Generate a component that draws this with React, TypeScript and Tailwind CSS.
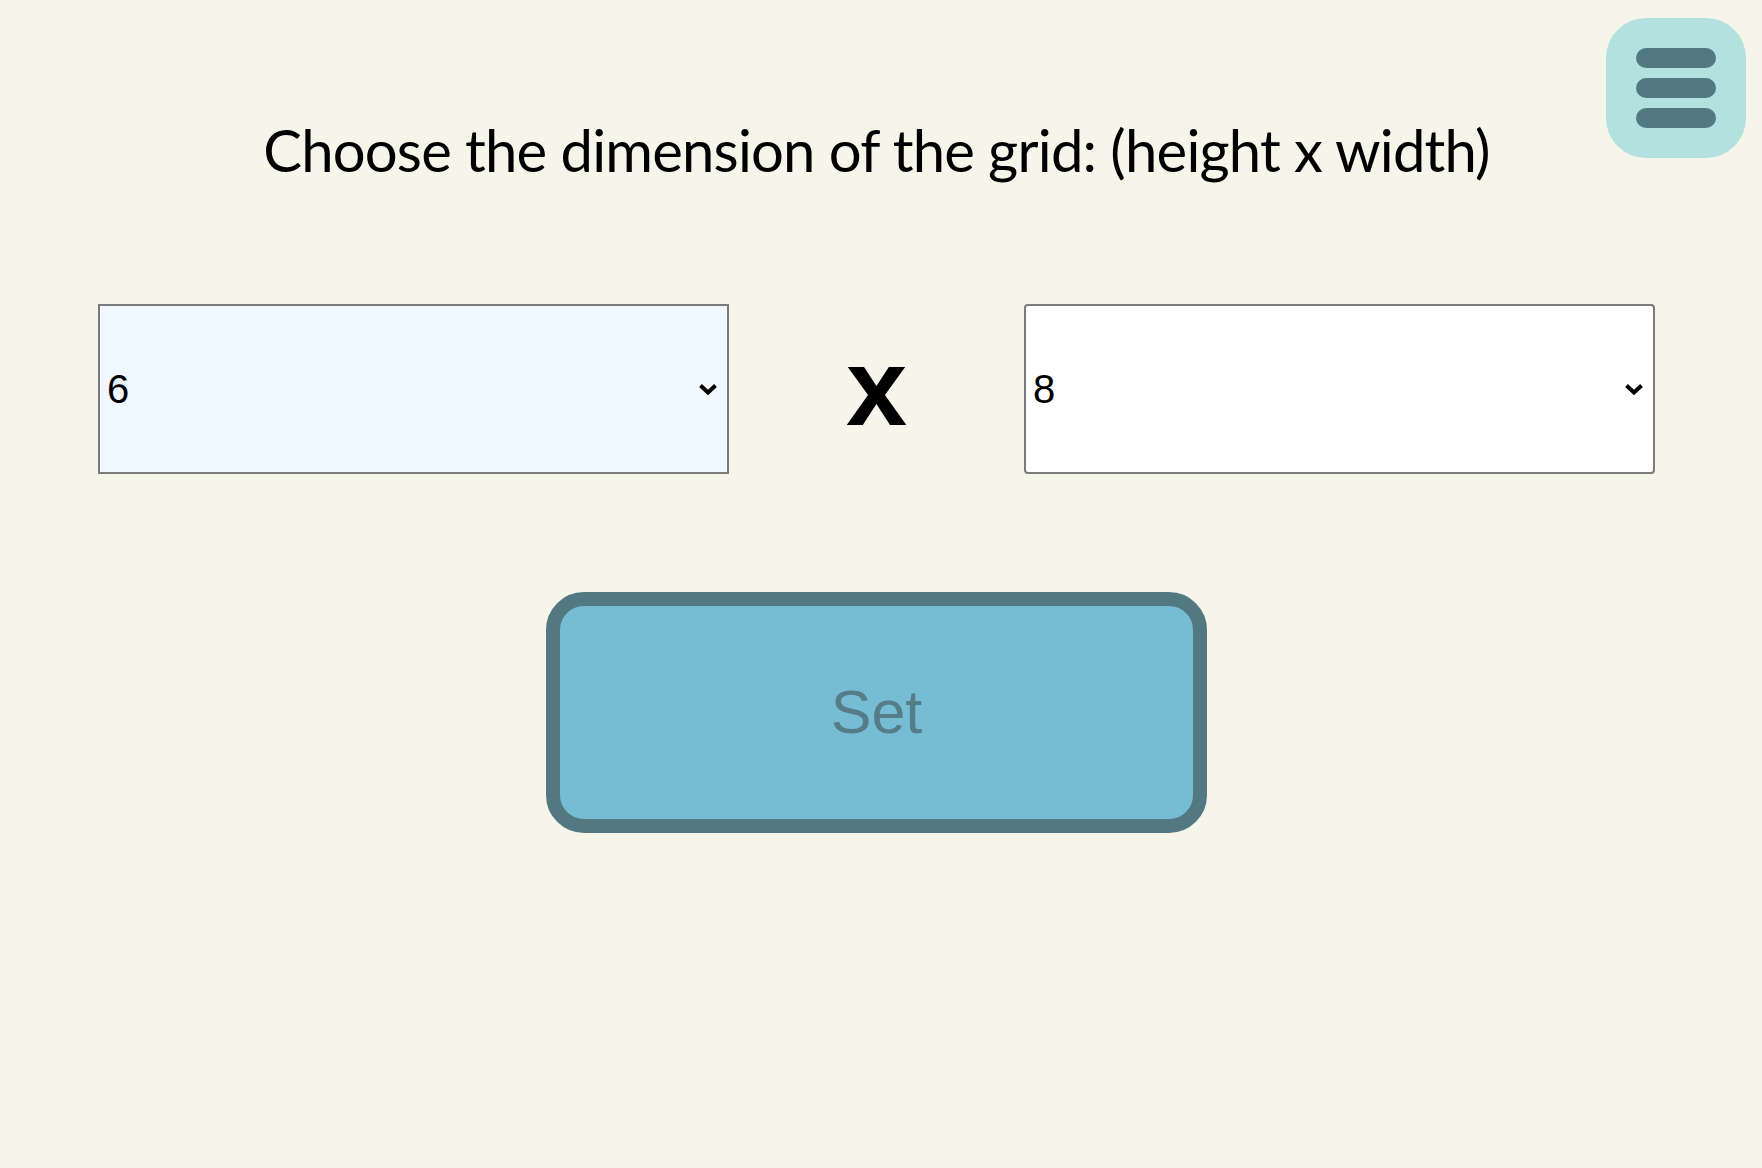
import { useState } from "react";

const selectBase =
  "w-full h-full appearance-none pl-[7px] pr-10 text-[40px] text-black outline-none cursor-pointer";

const Chevron = () => (
  <svg
    className="pointer-events-none absolute right-[9px] top-1/2 -translate-y-1/2"
    width="20"
    height="13"
    viewBox="0 0 20 13"
  >
    <path
      d="M2.5 3 L10 10 L17.5 3"
      fill="none"
      stroke="black"
      strokeWidth="4"
    />
  </svg>
);

const DimSelect = ({
  value,
  onChange,
  boxClass,
}: {
  value: number;
  onChange: (v: number) => void;
  boxClass: string;
}) => {
  return (
    <div className={`relative w-[631px] h-[170px] ${boxClass}`}>
      <select
        className={selectBase}
        style={{ fontFamily: '"Liberation Sans", Arial, sans-serif' }}
        value={value}
        onChange={(e) => onChange(parseInt(e.target.value))}
      >
        {[2, 3, 4, 5, 6, 7, 8, 9, 10, 11, 12].map((n) => (
          <option key={n} value={n}>
            {n}
          </option>
        ))}
      </select>
      <Chevron />
    </div>
  );
};

export default function App() {
  const [height, setHeight] = useState(6);
  const [width, setWidth] = useState(8);

  return (
    <div className="relative min-h-[1168px] w-full bg-[#f5f5e9]">
      <button
        type="button"
        className="absolute top-[18px] right-[16px] w-[140px] h-[140px] rounded-[40px] bg-[#b3e1e0] flex flex-col items-center justify-center gap-[10px]"
      >
        <span className="block w-[80px] h-[20px] rounded-full bg-[#527882]" />
        <span className="block w-[80px] h-[20px] rounded-full bg-[#527882]" />
        <span className="block w-[80px] h-[20px] rounded-full bg-[#527882]" />
      </button>

      <div className="flex flex-col items-center pr-[9px] pt-[121px]">
        <h1
          className="text-[58px] leading-[58px] tracking-[-0.8px] text-black font-normal"
          style={{ fontFamily: 'Lato, "Open Sans", sans-serif' }}
        >
          Choose the dimension of the grid: (height x width)
        </h1>

        <div className="mt-[125px] flex flex-row items-center">
          <DimSelect
            value={height}
            onChange={setHeight}
            boxClass="bg-[#eff7ff] border-2 border-[#7a7a7a]"
          />
          <div
            className="w-[295px] flex justify-center text-[110px] leading-none font-bold text-black -translate-y-[2px]"
            style={{ fontFamily: '"Liberation Sans", Arial, sans-serif' }}
          >
            x
          </div>
          <DimSelect
            value={width}
            onChange={setWidth}
            boxClass="bg-white border-2 border-[#7a7a7a] rounded-[4px]"
          />
        </div>

        <button
          type="button"
          className="mt-[118px] w-[661px] h-[241px] rounded-[38px] border-[14px] border-[#527882] bg-[#76bcd3] text-[61px] text-[#567d87]"
          style={{ fontFamily: '"Liberation Sans", Arial, sans-serif' }}
        >
          Set
        </button>
      </div>
    </div>
  );
}
